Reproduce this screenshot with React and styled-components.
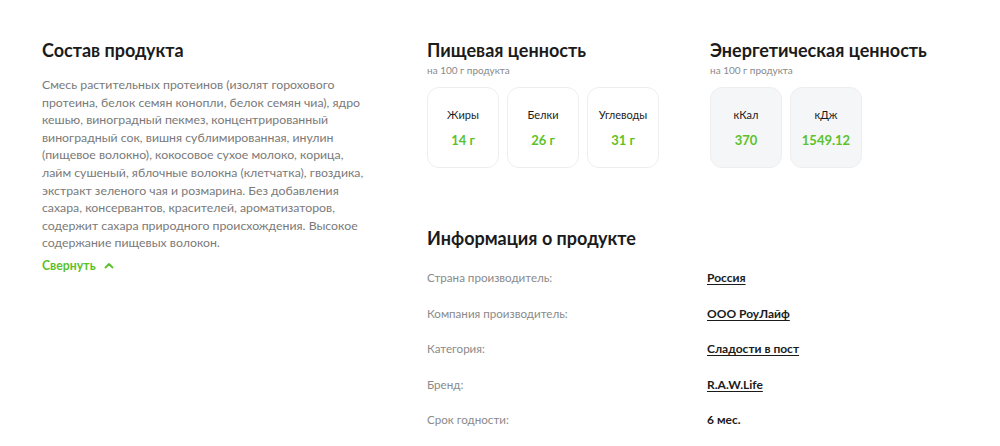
import React from 'react'
import styled, { createGlobalStyle } from 'styled-components'

const GlobalStyle = createGlobalStyle`
  * { box-sizing: border-box; }
  body {
    margin: 0;
    background: #ffffff;
    font-family: Lato, "Noto Sans", sans-serif;
    color: #1b1b1b;
  }
`

const compositionLines = [
  'Смесь растительных протеинов (изолят горохового',
  'протеина, белок семян конопли, белок семян чиа), ядро',
  'кешью, виноградный пекмез, концентрированный',
  'виноградный сок, вишня сублимированная, инулин',
  '(пищевое волокно), кокосовое сухое молоко, корица,',
  'лайм сушеный, яблочные волокна (клетчатка), гвоздика,',
  'экстракт зеленого чая и розмарина. Без добавления',
  'сахара, консервантов, красителей, ароматизаторов,',
  'содержит сахара природного происхождения. Высокое',
  'содержание пищевых волокон.',
]

const nutrition = [
  { label: 'Жиры', value: '14 г' },
  { label: 'Белки', value: '26 г' },
  { label: 'Углеводы', value: '31 г' },
]

const energy = [
  { label: 'кКал', value: '370' },
  { label: 'кДж', value: '1549.12' },
]

const info = [
  { label: 'Страна производитель:', value: 'Россия', link: true },
  { label: 'Компания производитель:', value: 'ООО РоуЛайф', link: true },
  { label: 'Категория:', value: 'Сладости в пост', link: true },
  { label: 'Бренд:', value: 'R.A.W.Life', link: true },
  { label: 'Срок годности:', value: '6 мес.', link: false },
]

function App() {
  return (
    <>
      <GlobalStyle />
      <Page>
        <Composition>
          <Title>Состав продукта</Title>
          <Body>
            {compositionLines.map((line, i) => (
              <React.Fragment key={i}>
                {line}
                {i < compositionLines.length - 1 && <br />}
              </React.Fragment>
            ))}
          </Body>
          <Toggle>
            Свернуть
            <svg width="10" height="7" viewBox="0 0 10 7" fill="none">
              <path d="M1.5 5.5L5 2L8.5 5.5" stroke="#5cc22b" strokeWidth="1.8" strokeLinecap="round" strokeLinejoin="round" />
            </svg>
          </Toggle>
        </Composition>

        <Details>
          <Values>
            <Block>
              <Title>Пищевая ценность</Title>
              <Sub>на 100 г продукта</Sub>
              <Cards>
                {nutrition.map((n) => (
                  <Card key={n.label}>
                    <CardLabel>{n.label}</CardLabel>
                    <CardValue>{n.value}</CardValue>
                  </Card>
                ))}
              </Cards>
            </Block>
            <Block>
              <Title>Энергетическая ценность</Title>
              <Sub>на 100 г продукта</Sub>
              <Cards>
                {energy.map((n) => (
                  <Card key={n.label} $filled>
                    <CardLabel>{n.label}</CardLabel>
                    <CardValue>{n.value}</CardValue>
                  </Card>
                ))}
              </Cards>
            </Block>
          </Values>

          <Info>
            <Title>Информация о продукте</Title>
            <InfoList>
              {info.map((row) => (
                <InfoRow key={row.label}>
                  <InfoLabel>{row.label}</InfoLabel>
                  <InfoValue $link={row.link}>{row.value}</InfoValue>
                </InfoRow>
              ))}
            </InfoList>
          </Info>
        </Details>
      </Page>
    </>
  )
}

const Page = styled.div`
  display: flex;
  padding: 38px 0 0 42px;
  width: 1000px;
  height: 446px;
  overflow: hidden;
`

const Composition = styled.section`
  width: 385px;
  padding-right: 20px;
  flex-shrink: 0;
`

const Title = styled.h2`
  margin: 0;
  font-size: 18px;
  font-weight: 700;
  line-height: 24px;
  color: #1b1b1b;
`

const Body = styled.p`
  margin: 14px 0 0;
  font-size: 12.3px;
  line-height: 17.6px;
  color: #7a7a7a;
  white-space: nowrap;
`

const Toggle = styled.button`
  display: flex;
  align-items: center;
  gap: 8px;
  margin-top: 6px;
  padding: 0;
  border: none;
  background: none;
  font-family: inherit;
  font-size: 12.3px;
  font-weight: 700;
  color: #5cc22b;
  cursor: pointer;
`

const Details = styled.div`
  display: flex;
  flex-direction: column;
`

const Values = styled.div`
  display: flex;
`

const Block = styled.div`
  width: 283px;
`

const Sub = styled.div`
  margin-top: 2px;
  font-size: 10px;
  line-height: 12px;
  color: #8a8a8a;
`

const Cards = styled.div`
  display: flex;
  gap: 8px;
  margin-top: 11px;
`

const Card = styled.div`
  display: flex;
  flex-direction: column;
  align-items: center;
  justify-content: center;
  gap: 10px;
  width: 72px;
  height: 81px;
  border-radius: 12px;
  border: 1px solid #eeeeee;
  background: ${(p) => (p.$filled ? '#f5f6f8' : '#ffffff')};
`

const CardLabel = styled.div`
  font-size: 11px;
  line-height: 14px;
  color: #1b1b1b;
`

const CardValue = styled.div`
  font-size: 13px;
  line-height: 16px;
  font-weight: 700;
  color: #5cc22b;
`

const Info = styled.section`
  margin-top: 58px;
`

const InfoList = styled.div`
  display: flex;
  flex-direction: column;
  gap: 20px;
  margin-top: 20px;
`

const InfoRow = styled.div`
  display: grid;
  grid-template-columns: 280px 1fr;
  align-items: center;
  height: 15.5px;
`

const InfoLabel = styled.div`
  font-size: 11.6px;
  color: #8a8a8a;
`

const InfoValue = styled.div`
  font-size: 12px;
  font-weight: 700;
  color: #1b1b1b;
  text-decoration: ${(p) => (p.$link ? 'underline' : 'none')};
  text-underline-offset: 2px;
  text-decoration-thickness: 1px;
`

export default App
